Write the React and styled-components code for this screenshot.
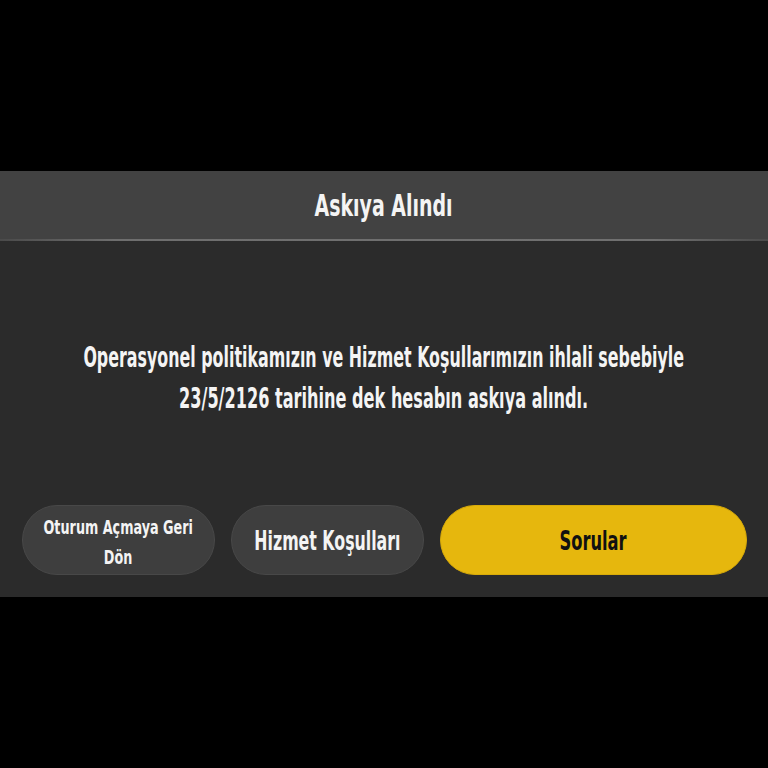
import React from 'react';
import styled, { createGlobalStyle } from 'styled-components';

const Global = createGlobalStyle`
  html, body {
    margin: 0;
    padding: 0;
    background: #000;
    overflow: hidden;
  }
  body {
    font-family: "DejaVu Sans Condensed", "DejaVu Sans", sans-serif;
    font-weight: bold;
  }
`;

const Screen = styled.div`
  width: 768px;
  height: 768px;
  display: flex;
  align-items: center;
`;

const Dialog = styled.div`
  width: 100%;
  height: 426px;
  display: flex;
  flex-direction: column;
  background: #2b2b2b;
`;

const Header = styled.div`
  height: 68px;
  display: flex;
  align-items: center;
  justify-content: center;
  background: #424242;
  border-bottom: 2px solid #666;
  border-image: linear-gradient(to right, #4a4a4a, #6e6e6e 15%, #707070 85%, #4a4a4a) 1;
`;

const Line = styled.div`
  width: 100%;
  min-width: 0;
  display: flex;
  justify-content: center;
  align-items: center;
  white-space: nowrap;
  height: ${(p) => p.$h || 41}px;
`;

const Squeeze = styled.span`
  display: inline-block;
  flex: none;
  transform: scaleX(${(p) => p.$sx});
  transform-origin: center;
  font-size: ${(p) => p.$size}px;
  color: ${(p) => p.$color || '#f4f4f4'};
  line-height: 1;
`;

const Body = styled.div`
  flex: 1;
  display: flex;
  flex-direction: column;
`;

const Message = styled.div`
  flex: 1;
  display: flex;
  flex-direction: column;
  justify-content: center;
  padding-top: 10px;
`;

const Actions = styled.div`
  display: flex;
  gap: 16px;
  padding: 0 22px 22px;
`;

const Button = styled.div`
  height: 70px;
  min-width: 0;
  box-sizing: border-box;
  border-radius: 35px;
  display: flex;
  flex-direction: column;
  align-items: center;
  justify-content: center;
  flex: ${(p) => (p.$primary ? '0 0 307px' : '0 0 193px')};
  background: ${(p) => (p.$primary ? '#e6b70d' : '#3e3e3e')};
  border: 1px solid ${(p) => (p.$primary ? '#d9ab08' : '#484848')};
`;

export default function App() {
  return (
    <Screen>
      <Global />
      <Dialog>
        <Header>
          <Line $h={40}>
            <Squeeze $size={31} $sx={0.68}>Askıya Alındı</Squeeze>
          </Line>
        </Header>
        <Body>
          <Message>
            <Line>
              <Squeeze $size={28} $sx={0.63}>
                Operasyonel politikamızın ve Hizmet Koşullarımızın ihlali sebebiyle
              </Squeeze>
            </Line>
            <Line>
              <Squeeze $size={28} $sx={0.64}>23/5/2126 tarihine dek hesabın askıya alındı.</Squeeze>
            </Line>
          </Message>
          <Actions>
            <Button>
              <Line $h={34}>
                <Squeeze $size={20} $sx={0.71}>Oturum Açmaya Geri</Squeeze>
              </Line>
              <Line $h={26}>
                <Squeeze $size={20} $sx={0.71}>Dön</Squeeze>
              </Line>
            </Button>
            <Button>
              <Line $h={30}>
                <Squeeze $size={27} $sx={0.65}>Hizmet Koşulları</Squeeze>
              </Line>
            </Button>
            <Button $primary>
              <Line $h={30}>
                <Squeeze $size={27} $sx={0.67} $color="#111">Sorular</Squeeze>
              </Line>
            </Button>
          </Actions>
        </Body>
      </Dialog>
    </Screen>
  );
}
